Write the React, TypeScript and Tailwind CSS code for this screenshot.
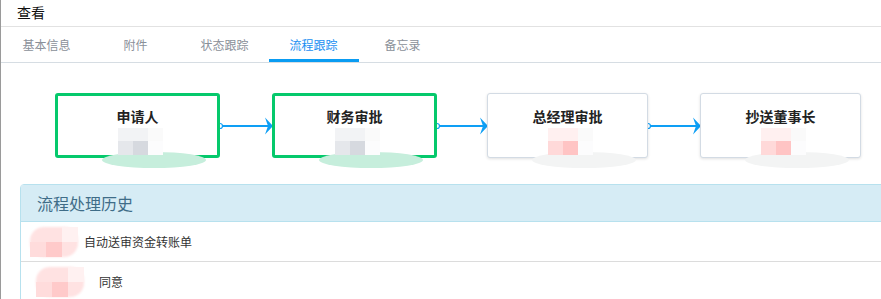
import React from "react";

const tabs = ["基本信息", "附件", "状态跟踪", "流程跟踪", "备忘录"];

function Arrow({ width }: { width: number }) {
    return (
        <svg width={width} height="20" viewBox={`0 0 ${width} 20`} className="overflow-visible">
            <circle cx="0" cy="10" r="2.5" fill="white" stroke="#0e9ff5" strokeWidth="1.2" />
            <line x1="2" y1="10" x2={width - 4} y2="10" stroke="#0e9ff5" strokeWidth="2.2" />
            <path
                d={`M${width + 1} 10 L${width - 7} 1.5 L${width - 4} 10 L${width - 7} 18.5 Z`}
                fill="#0e9ff5"
            />
        </svg>
    );
}

function Blocks({ tone, ellipse }: { tone: "gray" | "pink"; ellipse: string }) {
    const dark = tone === "gray" ? "bg-[#d6d9df]" : "bg-[#ffc4c4]";
    const mid = tone === "gray" ? "bg-[#e5e7eb]" : "bg-[#ffd9d9]";
    const light = tone === "gray" ? "bg-[#f2f3f5]" : "bg-[#fff0f0]";
    return (
        <>
            {/* blurred smear */}
            <div className={`absolute left-[-16px] top-[24px] w-[104px] h-[16px] rounded-[50%] ${ellipse}`}></div>
            {/* pixel blocks */}
            <div className="absolute left-0 top-0 flex flex-col">
                <div className="flex">
                    <div className={`w-[15px] h-[13px] ${light}`}></div>
                    <div className={`w-[15px] h-[13px] ${light}`}></div>
                    <div className="w-[15px] h-[13px] bg-[#fafafa]"></div>
                </div>
                <div className="flex">
                    <div className={`w-[15px] h-[14px] ${mid}`}></div>
                    <div className={`w-[15px] h-[14px] ${dark}`}></div>
                    <div className="w-[15px] h-[14px] bg-[#fcfcfd]"></div>
                </div>
            </div>
        </>
    );
}

function Node({
    title,
    active,
    tone,
    ellipse,
    width,
}: {
    title: string;
    active: boolean;
    tone: "gray" | "pink";
    ellipse: string;
    width: string;
}) {
    return (
        <div
            className={`relative h-[65px] ${width} rounded-[3px] bg-white flex flex-col items-center ${
                active
                    ? "border-[3px] border-[#05c96c]"
                    : "border border-[#d3dbe4] shadow-[0_1px_3px_rgba(0,0,0,0.12)]"
            }`}
        >
            <div className={`${active ? "mt-[10px]" : "mt-[12px]"} text-[14px] font-semibold text-[#222] leading-[20px]`}>
                {title}
            </div>
            <div className="relative w-[45px] h-[30px] ml-[6px] mt-[2px]">
                <Blocks tone={tone} ellipse={ellipse} />
            </div>
        </div>
    );
}

function Avatar({ className }: { className: string }) {
    return (
        <div className={`relative w-[48px] h-[30px] ${className}`}>
            <div className="absolute inset-0 rounded-[14px] bg-[#ffe2e2] blur-[1px]"></div>
            <div className="absolute left-[16px] top-[15px] w-[16px] h-[15px] bg-[#ffcaca]"></div>
            <div className="absolute left-[0px] top-[15px] w-[16px] h-[15px] bg-[#ffdcdc]"></div>
            <div className="absolute left-[32px] top-[0px] w-[16px] h-[15px] bg-[#fff1f1]"></div>
        </div>
    );
}

export default function App() {
    return (
        <div
            className="relative w-[881px] h-[299px] overflow-hidden bg-white border-l border-[#9a9a9a]"
            style={{ fontFamily: '"Noto Sans CJK SC", "Noto Sans", sans-serif' }}
        >
            {/* edge marks from parent page */}
            <div className="absolute left-[-1px] top-[190px] w-[1px] h-[66px] bg-[#2b6a8d]"></div>
            <div className="absolute left-[-1px] top-[16px] w-[1px] h-[8px] bg-[#4a86b0]"></div>

            {/* Title */}
            <div className="h-[27px] border-b border-[#e2e2e2] pl-[16px] text-[14px] leading-[25px] text-[#111]">
                查看
            </div>

            {/* Tabs */}
            <div className="h-[36px] border-b border-[#d6dde3] flex pl-[1px]">
                {tabs.map((t, i) => (
                    <div
                        key={t}
                        className={`relative w-[89px] flex items-center justify-center text-[12px] ${
                            i === 3 ? "text-[#1a8ff2]" : "text-[#8a9099]"
                        }`}
                    >
                        {t}
                        {i === 3 && (
                            <div className="absolute left-0 bottom-0 w-[90px] h-[3px] bg-[#0a9cf2]"></div>
                        )}
                    </div>
                ))}
            </div>

            {/* Flow chart */}
            <div className="flex items-center pl-[54px] mt-[30px]">
                <Node title="申请人" active tone="gray" ellipse="bg-[#c6eedc]" width="w-[165px]" />
                <Arrow width={52} />
                <Node title="财务审批" active tone="gray" ellipse="bg-[#c6eedc]" width="w-[165px]" />
                <Arrow width={50} />
                <Node title="总经理审批" active={false} tone="pink" ellipse="bg-[#f3f4f4]" width="w-[161px]" />
                <Arrow width={52} />
                <Node title="抄送董事长" active={false} tone="pink" ellipse="bg-[#f3f4f4]" width="w-[161px]" />
            </div>

            {/* History panel */}
            <div className="ml-[19px] mt-[26px] w-[900px] border border-[#b7e1ee] rounded-tl-[4px]">
                <div className="h-[37px] bg-[#d6ecf5] border-b border-[#b7e1ee] pl-[16px] flex items-center text-[16px] text-[#3f6d88]">
                    流程处理历史
                </div>
                <div className="h-[40px] border-b border-[#dcdcdc] flex items-center text-[12px] text-[#333]">
                    <Avatar className="ml-[9px] mr-[6px]" />
                    自动送审资金转账单
                </div>
                <div className="h-[40px] flex items-center text-[12px] text-[#333]">
                    <Avatar className="ml-[15px] mr-[15px]" />
                    同意
                </div>
            </div>
        </div>
    );
}
